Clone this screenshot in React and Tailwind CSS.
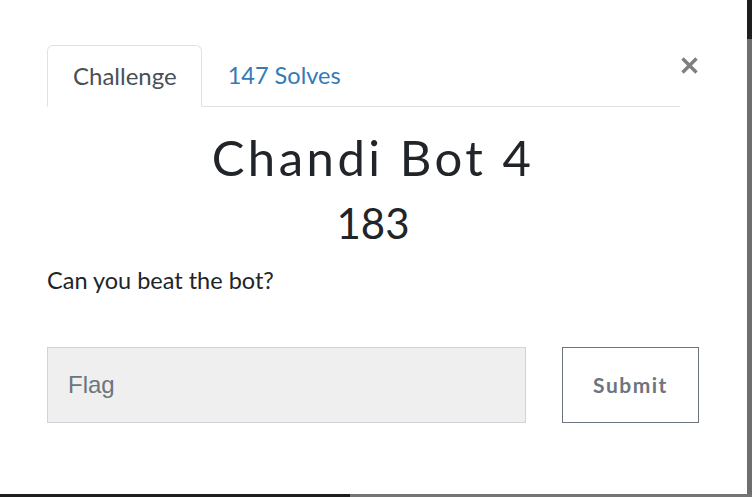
import { useState } from "react";

const CloseIcon = () => (
  <svg width="17" height="17" viewBox="0 0 17 17" fill="none">
    <path d="M1.5 1.5 L15.5 15.5 M15.5 1.5 L1.5 15.5" stroke="#7f7f7f" strokeWidth="3.4" strokeLinecap="butt" />
  </svg>
);

const App = () => {
  const [flag, setFlag] = useState("");
  const [tab, setTab] = useState("challenge");

  return (
    <div className="flex flex-col w-[752px] h-[497px] bg-[#6f6f6f] font-['Lato',sans-serif] overflow-hidden">
      <div className="flex flex-1">
        <div className="flex-1 flex flex-col bg-white pl-[47px] pr-[48px] pt-[45px]">
          <div className="flex items-start">
            <ul className="flex flex-1 h-[62px] border-b border-[#dee2e6]">
              <li
                onClick={() => setTab("challenge")}
                className="-mb-px h-[62px] pl-[25px] pr-[24px] flex items-center bg-white border border-[#dee2e6] border-b-white rounded-t-[6px] text-[24px] text-[#495057] cursor-pointer"
              >
                Challenge
              </li>
              <li
                onClick={() => setTab("solves")}
                className="h-[61px] px-[26px] flex items-center text-[23.5px] text-[#337ab7] cursor-pointer"
              >
                147 Solves
              </li>
            </ul>
            <button className="w-[19px] mt-[12px] pl-[1px] flex justify-start">
              <CloseIcon />
            </button>
          </div>

          <h3 className="mt-[26px] text-center text-[49px] leading-none tracking-[3.5px] text-[#212529] font-normal">
            Chandi Bot 4
          </h3>
          <h4 className="mt-[20px] text-center text-[42px] leading-none text-[#212529]">
            183
          </h4>
          <p className="mt-[25px] text-[23.5px] leading-none text-[#212529]">
            Can you beat the bot?
          </p>

          <div className="flex mt-[54px]">
            <input
              value={flag}
              onChange={(e) => setFlag(e.target.value)}
              placeholder="Flag"
              className="w-[479px] h-[76px] px-[20px] bg-[#efefef] border border-[#ced4da] text-[24px] font-['Liberation_Sans',sans-serif] text-[#495057] placeholder:text-[#6c757d] outline-none"
            />
            <button className="ml-auto w-[137px] h-[76px] border border-[#6c757d] text-[21px] font-bold tracking-[1.5px] text-[#6c757d]">
              Submit
            </button>
          </div>
        </div>
        <div className="w-[5px] flex flex-col">
          <div className="h-[39px] bg-[#1e1e1e]" />
          <div className="flex-1 bg-[#6e6e6e]" />
        </div>
      </div>
      <div className="h-[3px] flex">
        <div className="w-[350px] bg-[#1e1e1e]" />
        <div className="flex-1 bg-[#757575]" />
      </div>
    </div>
  );
};

export default App;
